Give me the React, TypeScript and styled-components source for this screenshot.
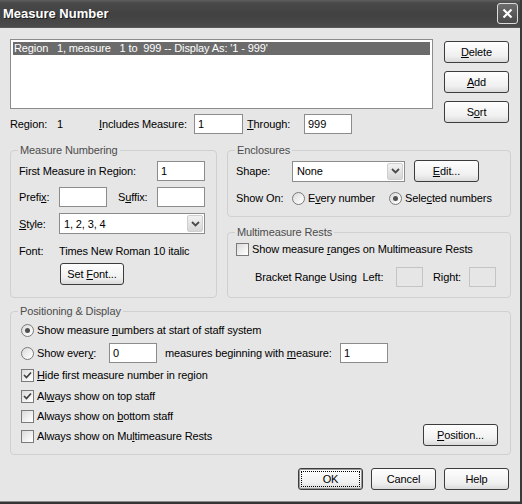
import React from 'react';
import styled, { createGlobalStyle } from 'styled-components';

const GlobalStyle = createGlobalStyle`
  html, body {
    margin: 0;
    padding: 0;
    background: #e6e6e6;
  }
  body {
    font-family: "Liberation Sans", Arial, sans-serif;
    font-size: 11px;
    letter-spacing: -0.12px;
    color: #000;
  }
`;

const Window = styled.div`
  width: 522px;
  height: 504px;
  box-sizing: border-box;
  background: #e6e6e6;
  border-right: 2px solid #3a3a3a;
  border-bottom: 2px solid #353535;
  box-shadow: inset 0 -1px 0 #8c8c8c;
  display: flex;
  flex-direction: column;
  overflow: hidden;
`;

const TitleBar = styled.div`
  height: 28px;
  flex: none;
  box-sizing: border-box;
  display: flex;
  align-items: center;
  justify-content: space-between;
  padding: 0 2px 0 3px;
  background: linear-gradient(#5e5e5e 0, #494949 3px, #414141 55%, #4b4b4b 100%);
  border-bottom: 1px solid #595959;
`;

const Title = styled.span`
  color: #fff;
  font-weight: bold;
  font-size: 13px;
  letter-spacing: 0;
  text-shadow: 1px 1px 0 #1c1c1c;
`;

const CloseButton = styled.div`
  width: 21px;
  height: 21px;
  box-sizing: border-box;
  border: 1px solid #dcdcdc;
  border-radius: 3px;
  background: linear-gradient(#6c6c6c, #4a4a4a);
  display: flex;
  align-items: center;
  justify-content: center;
`;

const Body = styled.div`
  flex: 1;
  display: flex;
  flex-direction: column;
  padding: 11px 9px 0 10px;
`;

const TopGrid = styled.div`
  display: grid;
  grid-template-columns: 423px 65px;
  column-gap: 11px;
  align-items: start;
`;

const ListColumn = styled.div`
  display: flex;
  flex-direction: column;
  gap: 5px;
`;

const ListBox = styled.div`
  height: 70px;
  box-sizing: border-box;
  border: 1px solid #8c8c8c;
  background: #fff;
  padding: 2px;
`;

const ListItem = styled.div<{ $selected?: boolean }>`
  height: 13px;
  line-height: 13px;
  padding-left: 1px;
  white-space: pre;
  background: ${(p) => (p.$selected ? '#6b6b6b' : 'transparent')};
  color: ${(p) => (p.$selected ? '#fff' : '#000')};
`;

const ButtonStack = styled.div`
  display: flex;
  flex-direction: column;
  gap: 8px;
  padding-top: 2px;
`;

const Button = styled.button<{ $w?: number; $default?: boolean }>`
  width: ${(p) => p.$w ?? 65}px;
  height: 22px;
  flex: none;
  box-sizing: border-box;
  padding: 0;
  border: 1px solid #3c3c3c;
  border-radius: 3px;
  background: linear-gradient(#fefefe 0%, #f0f0f0 70%, #dadada 100%);
  font-family: inherit;
  font-size: 11px;
  letter-spacing: inherit;
  color: #000;
  white-space: pre;
  outline: ${(p) => (p.$default ? '1px dotted #000' : 'none')};
  outline-offset: -4px;
  box-shadow: ${(p) => (p.$default ? 'inset 0 0 0 1px #9a9a9a' : 'none')};
`;

const Key = styled.span`
  text-decoration: underline;
  text-underline-offset: 1px;
`;

const Text = styled.span`
  white-space: pre;
`;

const Row = styled.div<{ $mt?: number; $h?: number; $pl?: number }>`
  display: flex;
  align-items: center;
  height: ${(p) => p.$h ?? 20}px;
  margin-top: ${(p) => p.$mt ?? 0}px;
  padding-left: ${(p) => p.$pl ?? 0}px;
  white-space: nowrap;
`;

const Label = styled.span<{ $w?: number; $ml?: number }>`
  flex: none;
  width: ${(p) => (p.$w ? `${p.$w}px` : 'auto')};
  margin-left: ${(p) => p.$ml ?? 0}px;
  white-space: pre;
`;

const PushRight = styled.span`
  margin-left: auto;
  margin-right: 4px;
  margin-bottom: 3px;
  display: flex;
`;

const TextBox = styled.input<{ $w: number; $disabled?: boolean }>`
  width: ${(p) => p.$w}px;
  height: 20px;
  flex: none;
  box-sizing: border-box;
  margin: 0;
  padding: 0 3px;
  border: 1px solid ${(p) => (p.$disabled ? '#c4c4c4' : '#8c8c8c')};
  background: ${(p) => (p.$disabled ? 'transparent' : '#fff')};
  font-family: inherit;
  font-size: 11px;
  color: #000;
  outline: none;
`;

const Combo = styled.div<{ $w: number }>`
  width: ${(p) => p.$w}px;
  height: 21px;
  flex: none;
  box-sizing: border-box;
  border: 1px solid #8c8c8c;
  background: #fff;
  display: flex;
  align-items: center;
  padding: 1px 1px 1px 4px;
`;

const ComboArrow = styled.span`
  margin-left: auto;
  width: 16px;
  height: 100%;
  box-sizing: border-box;
  border: 1px solid #cfcfcf;
  border-radius: 2px;
  background: linear-gradient(#f2f2f2, #d6d6d6);
  display: flex;
  align-items: center;
  justify-content: center;
`;

const Check = styled.span`
  width: 13px;
  height: 13px;
  flex: none;
  box-sizing: border-box;
  border: 1px solid #7a7a7a;
  background: linear-gradient(135deg, #dadada, #f8f8f8 75%, #fff);
  display: flex;
  align-items: center;
  justify-content: center;
  margin-right: 3px;
`;

const Radio = styled.span<{ $on?: boolean }>`
  width: 13px;
  height: 13px;
  flex: none;
  box-sizing: border-box;
  border: 1px solid #7a7a7a;
  border-radius: 50%;
  background: linear-gradient(135deg, #dadada, #f8f8f8 75%, #fff);
  margin-right: 3px;
  display: flex;
  align-items: center;
  justify-content: center;
  &::after {
    content: '';
    width: 5px;
    height: 5px;
    border-radius: 50%;
    background: ${(p) => (p.$on ? '#505050' : 'transparent')};
  }
`;

const Option = styled.span<{ $w?: number }>`
  display: flex;
  align-items: center;
  flex: none;
  width: ${(p) => (p.$w ? `${p.$w}px` : 'auto')};
`;

const Group = styled.fieldset<{ $pt: number; $pb: number; $grow?: boolean }>`
  margin: 0;
  min-width: 0;
  padding: ${(p) => p.$pt}px 8px ${(p) => p.$pb}px 8px;
  border: 1px solid #d0d0d0;
  border-radius: 4px;
  flex: ${(p) => (p.$grow ? 1 : 'none')};
`;

const Legend = styled.legend`
  padding: 0 2px;
  margin-left: -1px;
  line-height: 13px;
  font-size: 11px;
  color: #4c4c4c;
`;

const GroupsRow = styled.div`
  display: grid;
  grid-template-columns: 207px 284px;
  column-gap: 10px;
  margin-top: 10px;
`;

const RightColumn = styled.div`
  display: flex;
  flex-direction: column;
  gap: 9px;
`;

const NumberingGrid = styled.div`
  display: grid;
  grid-template-columns: 40px 48px 50px 48px;
  grid-template-rows: 20px 20px 21px 17px 22px;
  row-gap: 6px;
  align-items: center;
  white-space: nowrap;
`;

const Cell = styled.div<{ $col: string; $pl?: number; $self?: string }>`
  grid-column: ${(p) => p.$col};
  padding-left: ${(p) => p.$pl ?? 0}px;
  align-self: ${(p) => p.$self ?? 'auto'};
  white-space: pre;
`;

const PositionGroup = styled(Group)`
  margin-top: 7px;
`;

const ButtonBar = styled.div`
  display: flex;
  justify-content: flex-end;
  gap: 8px;
  margin-top: 13px;
  padding-right: 2px;
`;

const Chevron = () => (
  <svg width="9" height="6" viewBox="0 0 9 6">
    <path d="M1 1 L4.5 4.5 L8 1" fill="none" stroke="#4a4a4a" strokeWidth="1.8" />
  </svg>
);

const Tick = () => (
  <svg width="9" height="9" viewBox="0 0 9 9">
    <path d="M1 4 L3.5 6.5 L8 1.5" fill="none" stroke="#404040" strokeWidth="1.7" />
  </svg>
);

function CheckBox({ checked }: { checked?: boolean }) {
  return <Check>{checked && <Tick />}</Check>;
}

export default function App() {
  return (
    <>
      <GlobalStyle />
      <Window>
        <TitleBar>
          <Title>Measure Number</Title>
          <CloseButton>
            <svg width="11" height="11" viewBox="0 0 11 11">
              <path d="M1.5 1.5 L9.5 9.5 M9.5 1.5 L1.5 9.5" stroke="#fff" strokeWidth="2.2" />
            </svg>
          </CloseButton>
        </TitleBar>

        <Body>
          <TopGrid>
            <ListColumn>
              <ListBox>
                <ListItem $selected>{"Region   1, measure   1 to  999 -- Display As: '1 - 999'"}</ListItem>
              </ListBox>
              <Row>
                <Label $w={47}>Region:</Label>
                <Label $w={42}>1</Label>
                <Label $w={95}>
                  <Key>I</Key>ncludes Measure:
                </Label>
                <TextBox $w={49} defaultValue="1" />
                <Label $w={57} $ml={4}>
                  <Key>T</Key>hrough:
                </Label>
                <TextBox $w={48} defaultValue="999" />
              </Row>
            </ListColumn>
            <ButtonStack>
              <Button>
                <Key>D</Key>elete
              </Button>
              <Button>
                <Key>A</Key>dd
              </Button>
              <Button>
                S<Key>o</Key>rt
              </Button>
            </ButtonStack>
          </TopGrid>

          <GroupsRow>
            <Group $pt={4} $pb={12}>
              <Legend>Measure Numbering</Legend>
              <NumberingGrid>
                <Cell $col="1 / 4">First Measure in Region:</Cell>
                <Cell $col="4">
                  <TextBox $w={48} defaultValue="1" />
                </Cell>
                <Cell $col="1">
                  Prefi<Key>x</Key>:
                </Cell>
                <Cell $col="2">
                  <TextBox $w={48} defaultValue="" />
                </Cell>
                <Cell $col="3" $pl={11}>
                  S<Key>u</Key>ffix:
                </Cell>
                <Cell $col="4">
                  <TextBox $w={48} defaultValue="" />
                </Cell>
                <Cell $col="1">
                  <Key>S</Key>tyle:
                </Cell>
                <Cell $col="2 / 5">
                  <Combo $w={146}>
                    1, 2, 3, 4
                    <ComboArrow>
                      <Chevron />
                    </ComboArrow>
                  </Combo>
                </Cell>
                <Cell $col="1" $self="end">Font:</Cell>
                <Cell $col="2 / 5" $self="end">Times New Roman 10 italic</Cell>
                <Cell $col="2 / 4" $pl={1}>
                  <Button $w={64}>
                    Set <Key>F</Key>ont...
                  </Button>
                </Cell>
              </NumberingGrid>
            </Group>

            <RightColumn>
              <Group $pt={3} $pb={8}>
                <Legend>Enclosures</Legend>
                <Row $h={22}>
                  <Label $w={56}>Shape:</Label>
                  <Combo $w={113}>
                    None
                    <ComboArrow>
                      <Chevron />
                    </ComboArrow>
                  </Combo>
                  <Label $ml={9}>
                    <Button>
                      <Key>E</Key>dit...
                    </Button>
                  </Label>
                </Row>
                <Row $mt={6}>
                  <Label $w={56}>Show On:</Label>
                  <Option $w={97}>
                    <Radio />
                    <Text>
                      E<Key>v</Key>ery number
                    </Text>
                  </Option>
                  <Option>
                    <Radio $on />
                    <Text>
                      Sele<Key>c</Key>ted numbers
                    </Text>
                  </Option>
                </Row>
              </Group>

              <Group $pt={0} $pb={9} $grow>
                <Legend>Multimeasure Rests</Legend>
                <Row>
                  <CheckBox />
                  <Text>
                    Show measure <Key>r</Key>anges on Multimeasure Rests
                  </Text>
                </Row>
                <Row $mt={8} $pl={19}>
                  <Label $w={141}>{'Bracket Range Using  Left:'}</Label>
                  <TextBox $w={27} $disabled defaultValue="" />
                  <Label $w={36} $ml={10}>Right:</Label>
                  <TextBox $w={27} $disabled defaultValue="" />
                </Row>
              </Group>
            </RightColumn>
          </GroupsRow>

          <PositionGroup $pt={2} $pb={8}>
            <Legend>Positioning &amp; Display</Legend>
            <Row $pl={2}>
              <Radio $on />
              <Text>
                Show measure <Key>n</Key>umbers at start of staff system
              </Text>
            </Row>
            <Row $mt={2} $h={22} $pl={2}>
              <Option $w={88}>
                <Radio />
                <Text>
                  Show ever<Key>y</Key>:
                </Text>
              </Option>
              <TextBox $w={48} defaultValue="0" />
              <Label $ml={8} $w={175}>
                measures beginning with <Key>m</Key>easure:
              </Label>
              <TextBox $w={48} defaultValue="1" />
            </Row>
            <Row $mt={1} $pl={2}>
              <CheckBox checked />
              <Text>
                <Key>H</Key>ide first measure number in region
              </Text>
            </Row>
            <Row $mt={1} $pl={2}>
              <CheckBox checked />
              <Text>
                Al<Key>w</Key>ays show on top staff
              </Text>
            </Row>
            <Row $pl={2}>
              <CheckBox />
              <Text>
                Always show on <Key>b</Key>ottom staff
              </Text>
            </Row>
            <Row $pl={2}>
              <CheckBox />
              <Text>
                Always show on Mu<Key>l</Key>timeasure Rests
              </Text>
              <PushRight>
                <Button $w={75}>
                  <Key>P</Key>osition...
                </Button>
              </PushRight>
            </Row>
          </PositionGroup>

          <ButtonBar>
            <Button $default>OK</Button>
            <Button>Cancel</Button>
            <Button>Help</Button>
          </ButtonBar>
        </Body>
      </Window>
    </>
  );
}
